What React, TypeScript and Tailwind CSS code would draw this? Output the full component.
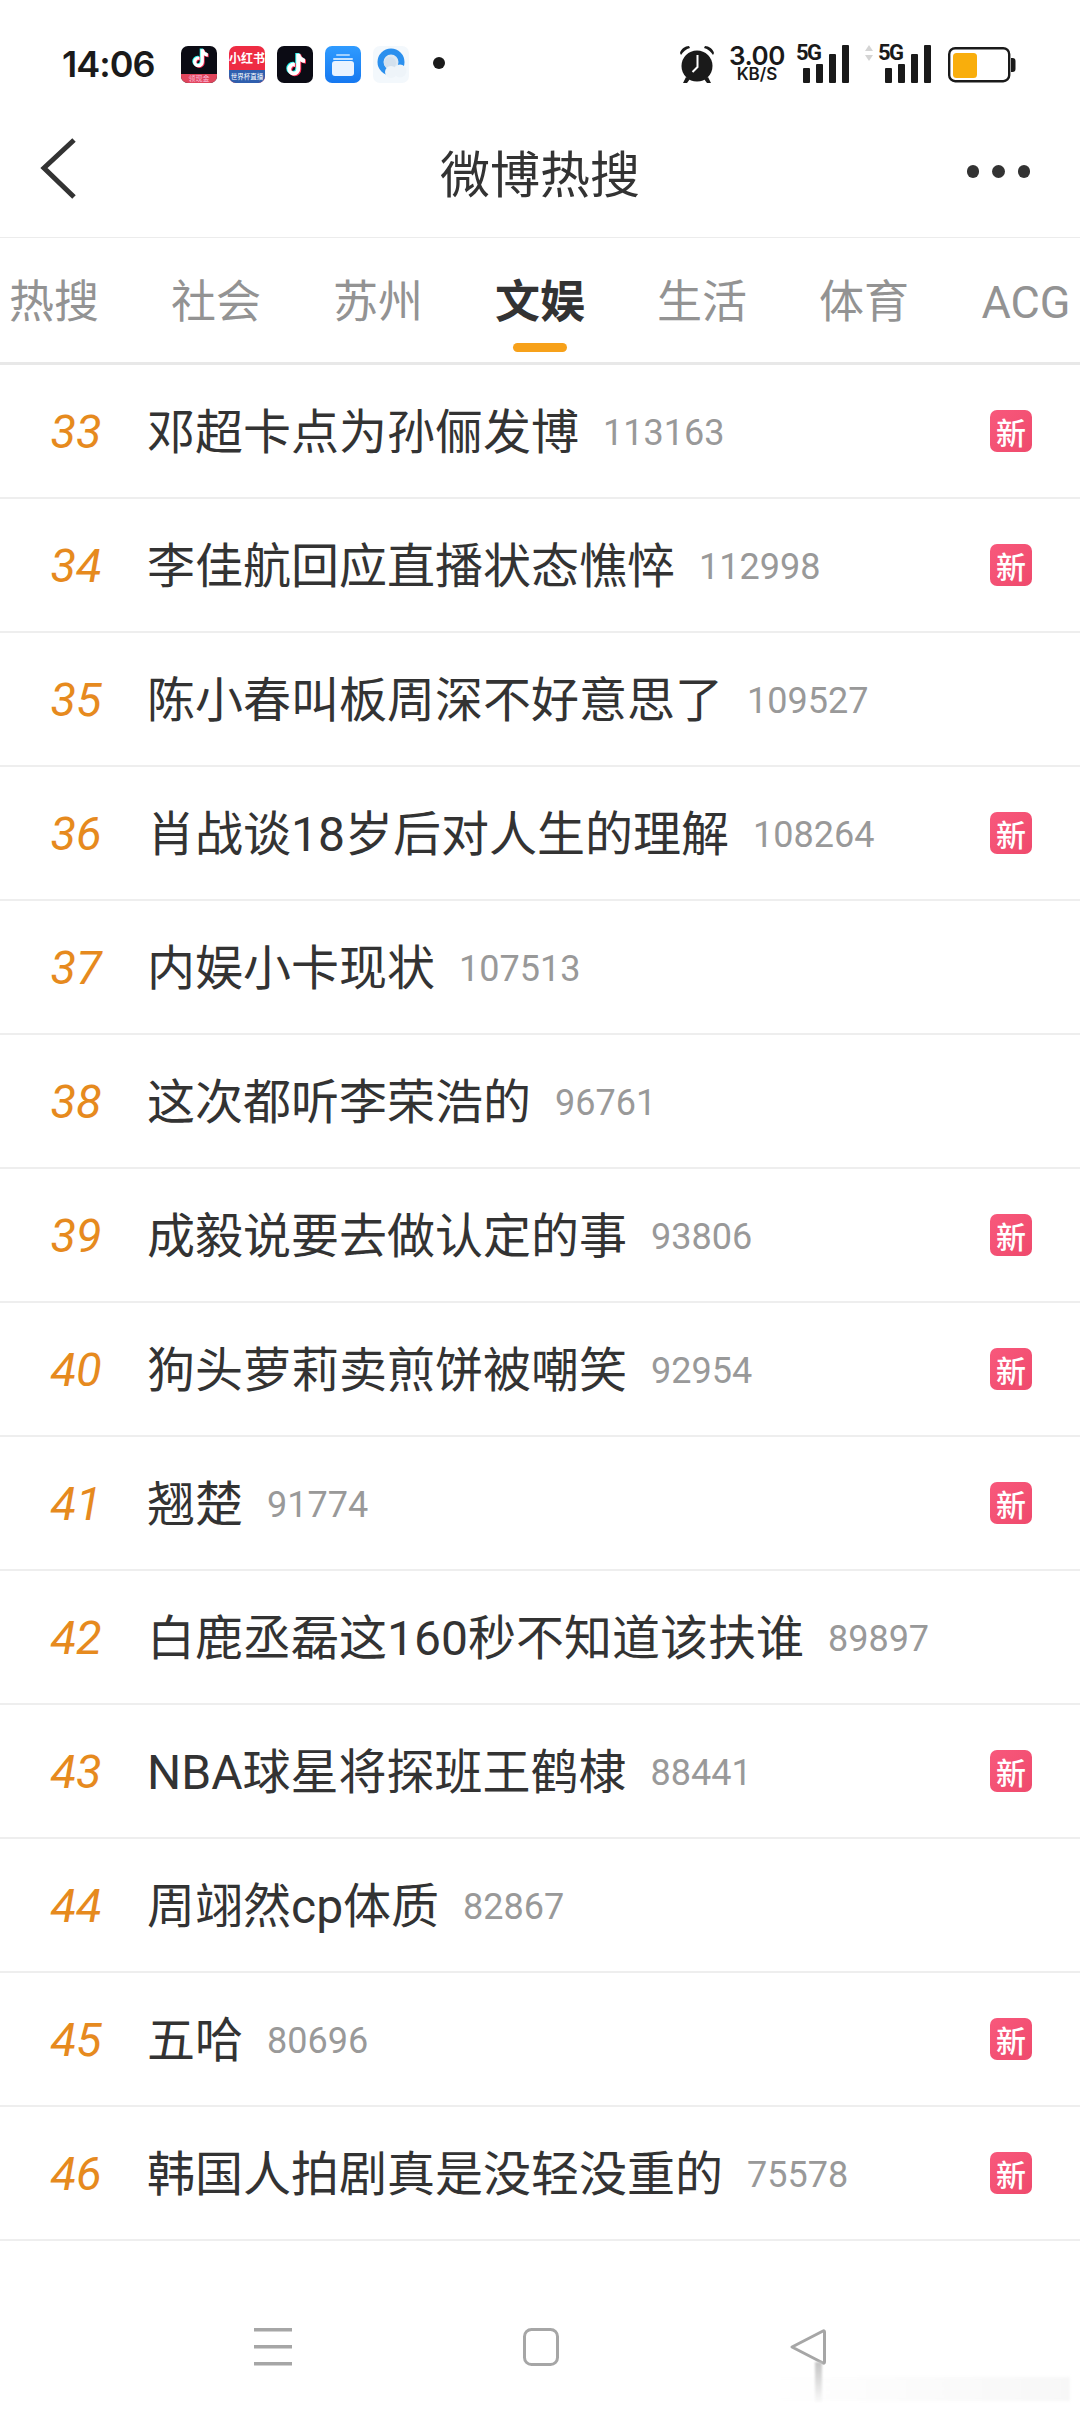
const ROWS: [number, string, string, boolean][] = [
  [33, "邓超卡点为孙俪发博", "113163", true],
  [34, "李佳航回应直播状态憔悴", "112998", true],
  [35, "陈小春叫板周深不好意思了", "109527", false],
  [36, "肖战谈18岁后对人生的理解", "108264", true],
  [37, "内娱小卡现状", "107513", false],
  [38, "这次都听李荣浩的", "96761", false],
  [39, "成毅说要去做认定的事", "93806", true],
  [40, "狗头萝莉卖煎饼被嘲笑", "92954", true],
  [41, "翘楚", "91774", true],
  [42, "白鹿丞磊这160秒不知道该扶谁", "89897", false],
  [43, "NBA球星将探班王鹤棣", "88441", true],
  [44, "周翊然cp体质", "82867", false],
  [45, "五哈", "80696", true],
  [46, "韩国人拍剧真是没轻没重的", "75578", true],
];
const TABS = ["热搜", "社会", "苏州", "文娱", "生活", "体育", "ACG"];

function Note({ size }: { size: number }) {
  const d = "M13 3h3.2c.3 2.2 1.6 3.6 3.8 3.9v3.2c-1.4 0-2.7-.4-3.8-1.2v6.3a5.2 5.2 0 1 1-5.2-5.2c.3 0 .6 0 .9.1v3.3a2 2 0 1 0 1.1 1.8V3z";
  return (
    <svg width={size} height={size} viewBox="0 0 24 24">
      <path d={d} fill="#25f4ee" transform="translate(-.8 -.6)" />
      <path d={d} fill="#fe2c55" transform="translate(.8 .6)" />
      <path d={d} fill="#fff" />
    </svg>
  );
}

function Signal() {
  return (
    <div className="relative w-[46px] h-[38px]">
      <span className="absolute left-[-7px] top-[-3px] text-[22px] leading-[22px] font-bold text-[#1a1a1a] tracking-[-1.5px] font-['Roboto',sans-serif]">5G</span>
      <svg width="46" height="38" viewBox="0 0 46 38" className="absolute left-0 top-0">
        <rect x="0" y="23" width="7" height="15" rx="1" fill="#1a1a1a" />
        <rect x="13" y="19" width="7" height="19" rx="1" fill="#1a1a1a" />
        <rect x="26" y="9" width="7" height="29" rx="1" fill="#1a1a1a" />
        <rect x="39" y="0" width="7" height="38" rx="1" fill="#1a1a1a" />
      </svg>
    </div>
  );
}

function StatusBar() {
  return (
    <div className="h-[93px] pt-[45px] pl-[62px] pr-[64px] flex items-start">
      <span className="w-[119px] text-[36px] leading-[38px] font-semibold text-[#1a1a1a] font-['Inter',sans-serif] tracking-[-1px]">14:06</span>
      <div className="flex gap-[12px] items-start pt-[1px]">
        <div className="relative w-[36px] h-[37px] rounded-[7px] bg-[#0b0b14] overflow-hidden flex justify-center">
          <Note size={25} />
          <div className="absolute left-0 right-0 bottom-0 h-[9px] bg-[#e0455c] flex items-center justify-center text-[7px] leading-none text-[#fbd] font-['Noto_Sans_CJK_SC',sans-serif] whitespace-nowrap">领现金</div>
        </div>
        <div className="relative w-[36px] h-[37px] rounded-[7px] bg-[#ee2c43] overflow-hidden flex justify-center">
          <span className="text-[12px] leading-[24px] text-white font-bold font-['Noto_Sans_CJK_SC',sans-serif] whitespace-nowrap">小红书</span>
          <div className="absolute left-0 right-0 bottom-0 h-[13px] bg-[#2f5fae] flex items-center justify-center text-[6.500px] leading-none text-white font-['Noto_Sans_CJK_SC',sans-serif] whitespace-nowrap">世界杯直播</div>
        </div>
        <div className="w-[36px] h-[37px] rounded-[7px] bg-[#0b0b14] flex items-center justify-center">
          <Note size={30} />
        </div>
        <div className="w-[36px] h-[37px] rounded-[7px] bg-gradient-to-b from-[#2f9bff] to-[#1678f0] flex items-center justify-center">
          <svg width="26" height="24" viewBox="0 0 26 24">
            <rect x="6" y="1" width="14" height="2" rx="1" fill="#9fd0ff" />
            <rect x="3" y="5" width="20" height="2" rx="1" fill="#c5e2ff" />
            <rect x="2" y="8" width="22" height="15" rx="3" fill="#e9f3ff" />
          </svg>
        </div>
        <svg width="36" height="37" viewBox="0 0 36 37">
          <rect x="0" y="0" width="36" height="37" rx="7" fill="#f3f8fc" />
          <circle cx="18" cy="16" r="13" fill="#dde9f3" />
          <circle cx="18" cy="16" r="10.500" fill="none" stroke="#2b90ee" strokeWidth="6" />
          <circle cx="17" cy="17" r="6" fill="#d3e1ee" />
          <circle cx="27" cy="25" r="6.500" fill="#eef4f9" />
          <circle cx="18" cy="26" r="6" fill="#eef4f9" />
        </svg>
      </div>
      <div className="ml-[24px] mt-[12px] w-[12px] h-[12px] rounded-full bg-[#1a1a1a]" />
      <div className="ml-auto flex items-start">
        <svg width="38" height="40" viewBox="0 0 38 40" className="mt-[-1px]">
          <circle cx="19" cy="22" r="15.500" fill="#1a1a1a" />
          <path d="M2 9c1-4 5-7 9-7l1 2C8 5 5 8 3 11zM36 9c-1-4-5-7-9-7l-1 2c4 1 7 4 9 7z" fill="#1a1a1a" />
          <path d="M8 33l-3 6h4l3-4zM30 33l3 6h-4l-3-4z" fill="#1a1a1a" />
          <path d="M19.500 11v12l-5 5" fill="none" stroke="#fff" strokeWidth="2" />
        </svg>
        <div className="ml-[11px] w-[60px] flex flex-col items-center font-['Inter',sans-serif] text-[#1a1a1a]">
          <span className="text-[26px] leading-[22px] font-semibold tracking-[-0.5px]">3.00</span>
          <span className="text-[17px] leading-[15px] font-semibold">KB/S</span>
        </div>
        <div className="ml-[16px]"><Signal /></div>
        <svg width="10" height="16" viewBox="0 0 10 16" className="ml-[15px]">
          <path d="M5 0l4 6H1zM5 16l4-6H1z" fill="#d4d4d4" />
        </svg>
        <div className="ml-[11px]"><Signal /></div>
        <svg width="68" height="36" viewBox="0 0 68 36" className="ml-[17px] mt-[2px]">
          <rect x="1.200" y="1.200" width="60" height="33" rx="6" fill="#fff" stroke="#1a1a1a" strokeWidth="2.400" />
          <rect x="5" y="6" width="24" height="25" rx="3.500" fill="#f9ae0c" />
          <path d="M63 11h1.500a3 3 0 0 1 3 3v8a3 3 0 0 1-3 3H63z" fill="#1a1a1a" />
        </svg>
      </div>
    </div>
  );
}

function Header() {
  return (
    <div className="relative h-[145px] border-b border-[#ececec] flex items-start justify-center">
      <span className="mt-[43px] text-[50px] leading-[70px] text-[#333] font-['Noto_Sans_CJK_SC',sans-serif]">微博热搜</span>
      <svg width="40" height="66" viewBox="0 0 40 66" className="absolute left-[40px] top-[44px]">
        <path d="M34 3L4 31l30 29" fill="none" stroke="#333" strokeWidth="5" />
      </svg>
      <div className="absolute right-[50px] top-[72px] flex gap-[13px]">
        <span className="w-[12.5px] h-[12.5px] rounded-full bg-[#333]" />
        <span className="w-[12.5px] h-[12.5px] rounded-full bg-[#333]" />
        <span className="w-[12.5px] h-[12.5px] rounded-full bg-[#333]" />
      </div>
    </div>
  );
}

function Tabs() {
  return (
    <div className="h-[127px] border-b-[3px] border-[#e8e8e8] overflow-hidden flex">
      <div className="flex ml-[-27px]">
        {TABS.map((t) => (
          <div key={t} className="relative w-[162px] shrink-0 flex justify-center pt-[35px]">
            <span className={`text-[45px] leading-[60px] font-['Roboto','Noto_Sans_CJK_SC',sans-serif] whitespace-nowrap ${t === "文娱" ? "font-bold text-[#333]" : "font-normal text-[#939393]"}`}>{t}</span>
            {t === "文娱" && <div className="absolute left-[54px] top-[105px] w-[54px] h-[9px] rounded-full bg-[#f7a11a]" />}
          </div>
        ))}
      </div>
    </div>
  );
}

function Row({ rank, title, count, isNew }: { rank: number; title: string; count: string; isNew: boolean }) {
  return (
    <div className="h-[134px] border-b-2 border-[#eeeeee] flex items-center">
      <span className="ml-[26px] mr-[21px] w-[100px] pt-[2px] text-center text-[47px] font-normal italic text-[#e68a1e] font-['Roboto',sans-serif]">{rank}</span>
      <span className="pt-[3px] text-[48px] text-[#333] font-['Roboto','Noto_Sans_CJK_SC',sans-serif] whitespace-nowrap">{title}</span>
      <span className="ml-[24px] pt-[3px] text-[36px] text-[#999] font-['Roboto',sans-serif]">{count}</span>
      {isNew && (
        <span className="ml-auto mr-[48px] w-[42px] h-[42px] rounded-[7px] bg-gradient-to-br from-[#f8587c] to-[#ef4a6c] flex items-center justify-center text-[30px] leading-none font-medium text-white font-['Noto_Sans_CJK_SC',sans-serif]">新</span>
      )}
    </div>
  );
}

function NavBar() {
  return (
    <div className="relative flex-1 pt-[87px] pl-[254px] flex items-start">
      <svg width="38" height="38" viewBox="0 0 38 38">
        <rect x="0" y="0" width="38" height="3.500" fill="#a6a6a6" />
        <rect x="0" y="17" width="38" height="3.500" fill="#a6a6a6" />
        <rect x="0" y="34" width="38" height="3.500" fill="#a6a6a6" />
      </svg>
      <svg width="36" height="38" viewBox="0 0 36 38" className="ml-[231px]">
        <rect x="1.500" y="1.500" width="33" height="35" rx="7" fill="none" stroke="#a6a6a6" strokeWidth="3" />
      </svg>
      <svg width="38" height="38" viewBox="0 0 38 38" className="ml-[230px]">
        <path d="M34 3L3 19l31 16c1 .5 1.500 0 1.500-1V4c0-1-.5-1.500-1.500-1z" fill="none" stroke="#a6a6a6" strokeWidth="3" strokeLinejoin="round" />
      </svg>
      <div className="absolute left-[760px] bottom-[11px] w-[310px] h-[24px] bg-gradient-to-r from-white to-[#f7f7f7] blur-[1.500px]" />
      <div className="absolute left-[815px] bottom-[10px] w-[7px] h-[40px] bg-gradient-to-b from-[#c4c4c4] to-[#fafafa] blur-[1px]" />
    </div>
  );
}

export default function App() {
  return (
    <div className="w-[1080px] h-[2412px] bg-white flex flex-col overflow-hidden">
      <StatusBar />
      <Header />
      <Tabs />
      {ROWS.map(([r, t, c, n]) => (
        <Row key={r} rank={r} title={t} count={c} isNew={n} />
      ))}
      <NavBar />
    </div>
  );
}
